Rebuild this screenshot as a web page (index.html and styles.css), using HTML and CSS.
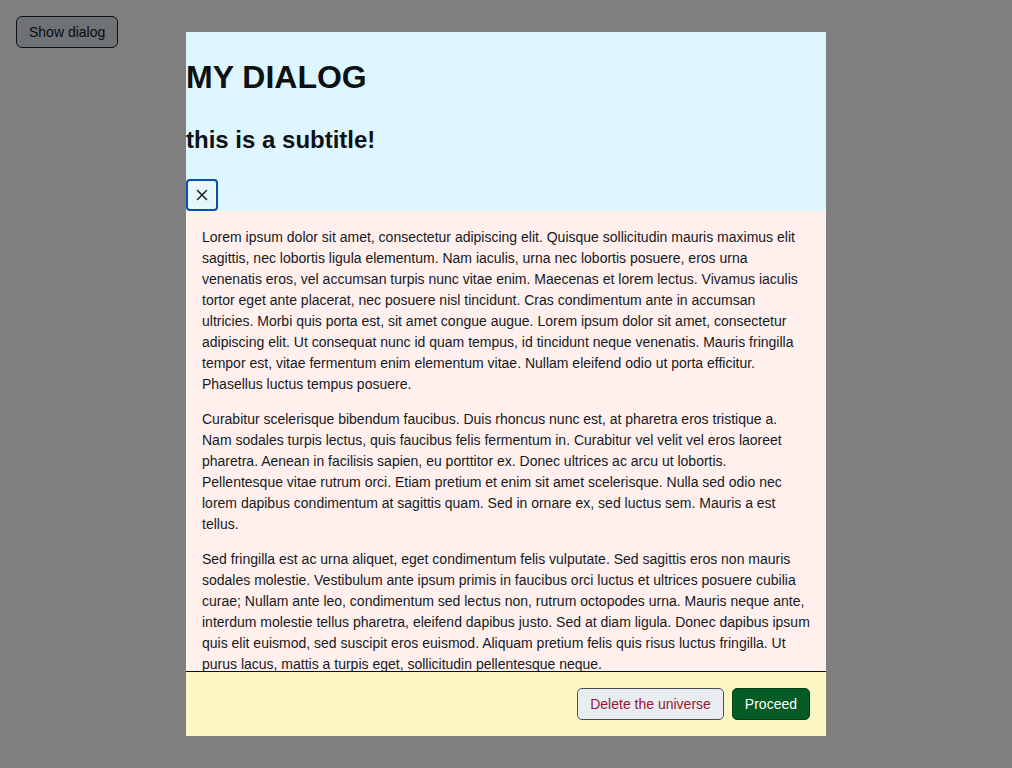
FILE: index.html
```html
<!DOCTYPE html>
<html lang="en">
<head>
<meta charset="utf-8">
<title>Dialog</title>
<link rel="stylesheet" href="styles.css">
</head>
<body>
<main class="page">
  <button class="btn page-btn" type="button">Show dialog</button>
</main>
<div class="backdrop">
  <section class="dialog" role="dialog" aria-labelledby="dlg-title">
    <header class="dialog-header">
      <h1 id="dlg-title" class="dialog-title">MY DIALOG</h1>
      <h2 class="dialog-subtitle">this is a subtitle!</h2>
      <button class="close-btn" type="button" aria-label="Close">
        <svg width="12" height="12" viewBox="0 0 12 12" aria-hidden="true"><path d="M1.5 1.5L10.5 10.5M10.5 1.5L1.5 10.5" stroke="#1b1f24" stroke-width="1.5" stroke-linecap="round" fill="none"/></svg>
      </button>
    </header>
    <div class="dialog-body">
      <p>Lorem ipsum dolor sit amet, consectetur adipiscing elit. Quisque sollicitudin mauris maximus elit sagittis, nec lobortis ligula elementum. Nam iaculis, urna nec lobortis posuere, eros urna venenatis eros, vel accumsan turpis nunc vitae enim. Maecenas et lorem lectus. Vivamus iaculis tortor eget ante placerat, nec posuere nisl tincidunt. Cras condimentum ante in accumsan ultricies. Morbi quis porta est, sit amet congue augue. Lorem ipsum dolor sit amet, consectetur adipiscing elit. Ut consequat nunc id quam tempus, id tincidunt neque venenatis. Mauris fringilla tempor est, vitae fermentum enim elementum vitae. Nullam eleifend odio ut porta efficitur. Phasellus luctus tempus posuere.</p>
      <p>Curabitur scelerisque bibendum faucibus. Duis rhoncus nunc est, at pharetra eros tristique a. Nam sodales turpis lectus, quis faucibus felis fermentum in. Curabitur vel velit vel eros laoreet pharetra. Aenean in facilisis sapien, eu porttitor ex. Donec ultrices ac arcu ut lobortis. Pellentesque vitae rutrum orci. Etiam pretium et enim sit amet scelerisque. Nulla sed odio nec lorem dapibus condimentum at sagittis quam. Sed in ornare ex, sed luctus sem. Mauris a est tellus.</p>
      <p>Sed fringilla est ac urna aliquet, eget condimentum felis vulputate. Sed sagittis eros non mauris sodales molestie. Vestibulum ante ipsum primis in faucibus orci luctus et ultrices posuere cubilia curae; Nullam ante leo, condimentum sed lectus non, rutrum octopodes urna. Mauris neque ante, interdum molestie tellus pharetra, eleifend dapibus justo. Sed at diam ligula. Donec dapibus ipsum quis elit euismod, sed suscipit eros euismod. Aliquam pretium felis quis risus luctus fringilla. Ut purus lacus, mattis a turpis eget, sollicitudin pellentesque neque.</p>
    </div>
    <footer class="dialog-footer">
      <button class="btn btn-danger" type="button">Delete the universe</button>
      <button class="btn btn-primary" type="button">Proceed</button>
    </footer>
  </section>
</div>
</body>
</html>
```

FILE: styles.css
```css
* { box-sizing: border-box; }

html, body {
  margin: 0;
  height: 100%;
}

body {
  background: #ffffff;
  color: #111418;
  font-family: "Liberation Sans", Arial, sans-serif;
}

.page {
  padding: 16px;
}

.btn {
  height: 32px;
  padding: 0 12px;
  border: 1px solid #4b5056;
  border-radius: 5px;
  font-family: "Liberation Sans", Arial, sans-serif;
  font-size: 14px;
  line-height: 30px;
  cursor: pointer;
}

.page-btn {
  background: #dde3ea;
  color: #14171a;
  border-color: #1d2126;
  border-radius: 6px;
}

.backdrop {
  position: fixed;
  inset: 0;
  background: rgba(0, 0, 0, 0.5);
  display: flex;
  align-items: center;
  justify-content: center;
}

.dialog {
  width: 640px;
  height: 704px;
  display: flex;
  flex-direction: column;
  overflow: hidden;
  background: #fff0ee;
}

.dialog-header {
  background: #def6ff;
  padding: 0;
  flex: none;
}

.dialog-title {
  margin: 27px 0 0;
  font-size: 32px;
  line-height: 37px;
  font-weight: 700;
  color: #0e1114;
}

.dialog-subtitle {
  margin: 30px 0 0;
  font-size: 24px;
  line-height: 28px;
  font-weight: 700;
  color: #0e1114;
}

.close-btn {
  display: flex;
  align-items: center;
  justify-content: center;
  width: 32px;
  height: 32px;
  margin: 25px 0 0;
  padding: 0;
  border: 2px solid #0b4fae;
  border-radius: 4px;
  background: #e6f7fe;
  cursor: pointer;
}

.dialog-body {
  flex: 1;
  min-height: 0;
  overflow: hidden;
  padding: 16px 16px 0;
  background: #fff0ee;
  color: #16191c;
  font-size: 14px;
  line-height: 21px;
}

.dialog-body p {
  margin: 0 0 14px;
}

.dialog-footer {
  flex: none;
  height: 65px;
  border-top: 1px solid #111;
  background: #fcf7c2;
  display: flex;
  align-items: center;
  justify-content: flex-end;
  gap: 8px;
  padding: 0 16px;
}

.btn-danger {
  background: #e8edf2;
  color: #9b1432;
  border-color: #4a4f55;
}

.btn-primary {
  background: #045b23;
  color: #ffffff;
  border-color: #033f18;
}
```
